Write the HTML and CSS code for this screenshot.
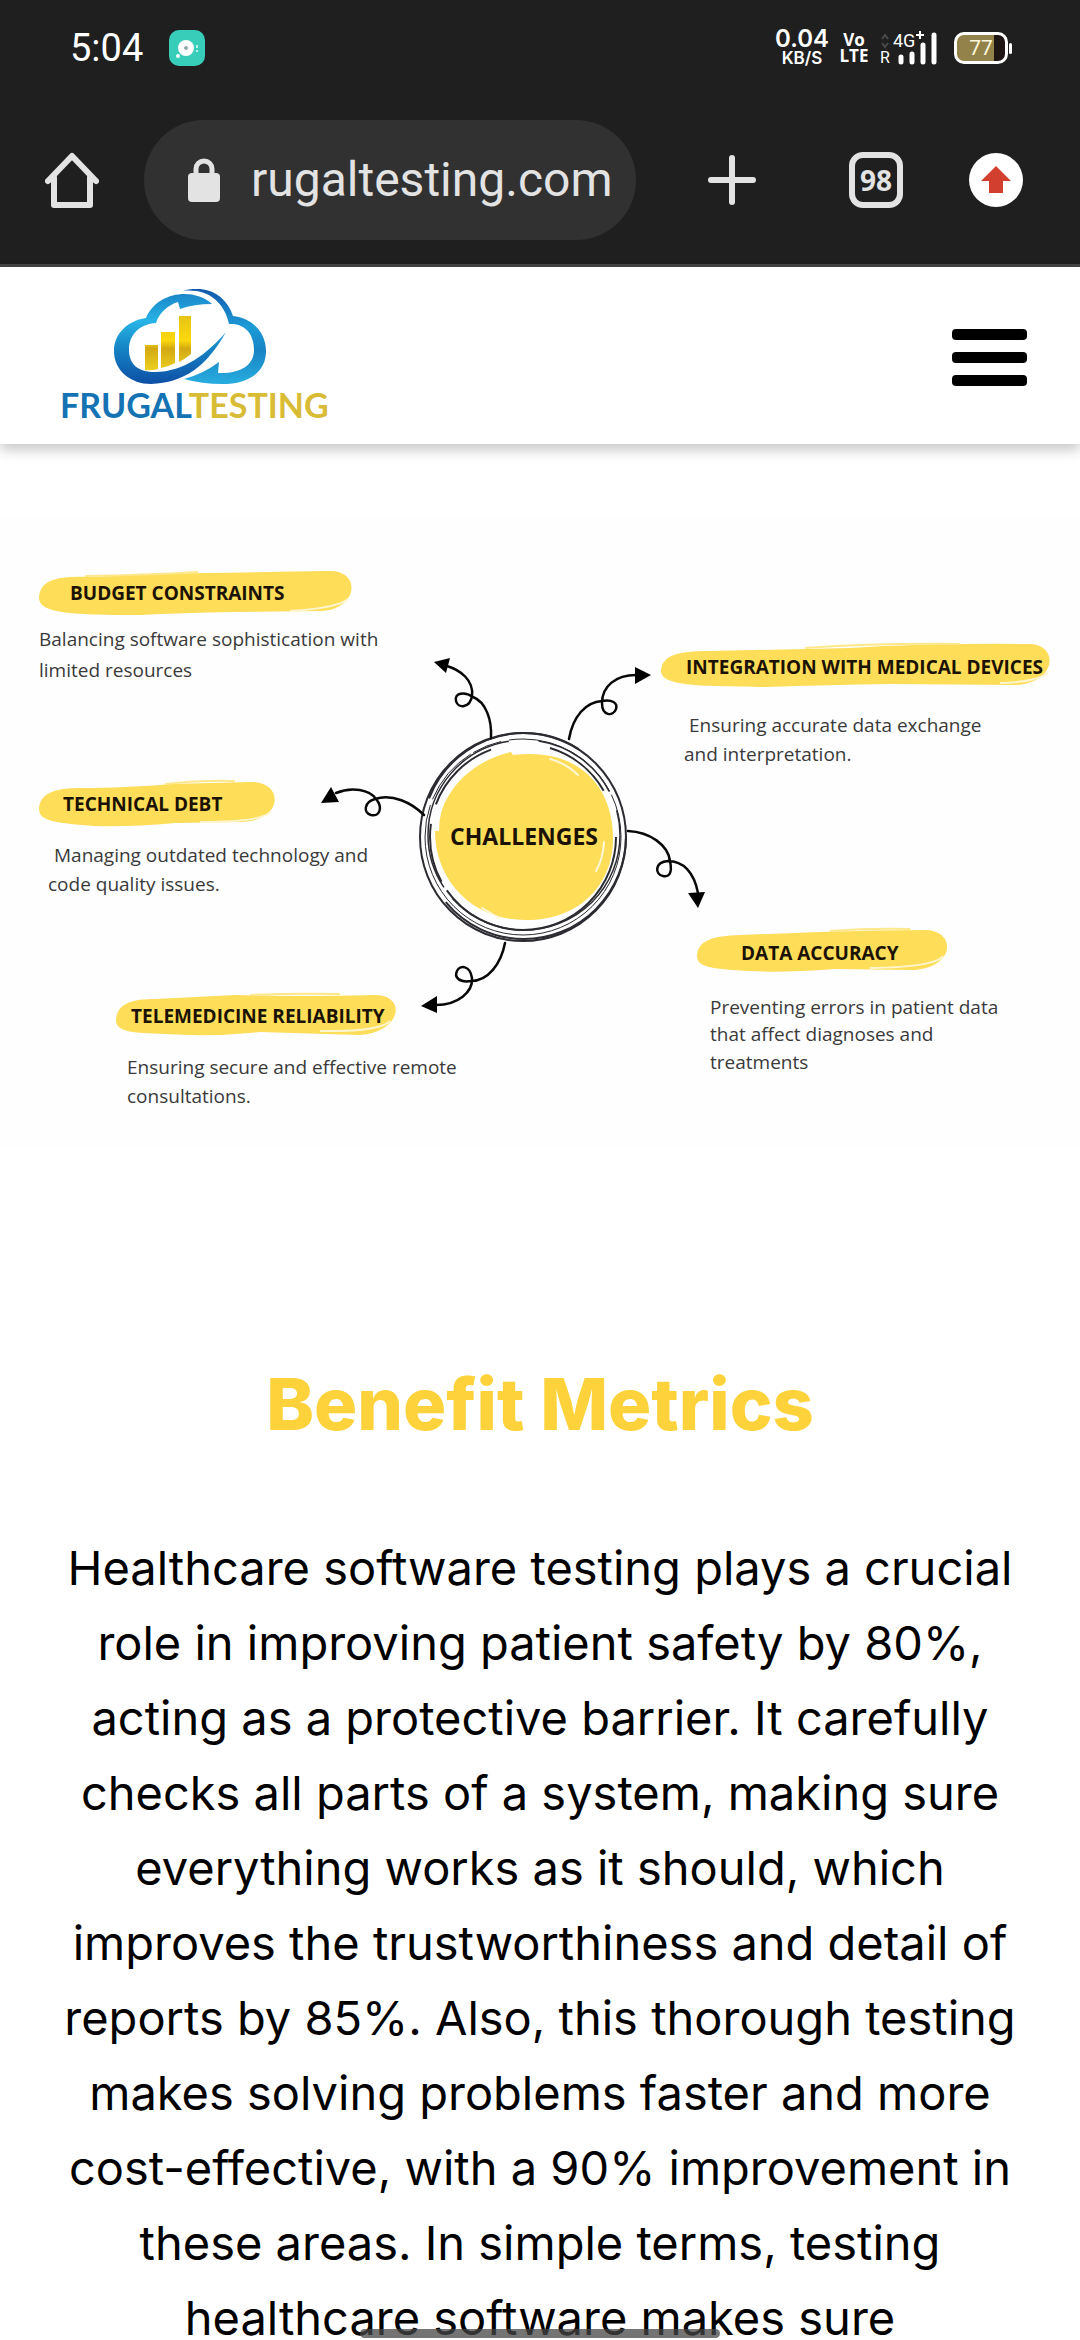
FILE: index.html
```html
<!DOCTYPE html>
<html lang="en">
<head>
<meta charset="utf-8">
<meta name="viewport" content="width=device-width, initial-scale=1">
<title>Frugal Testing</title>
<link rel="stylesheet" href="styles.css">
</head>
<body>
<div class="status">
  <time class="clock">5:04</time>
  <svg class="app-dot" viewBox="0 0 36 36" aria-hidden="true"><rect width="36" height="36" rx="10" fill="#38cdb8"/><circle cx="17" cy="18" r="8" fill="#fff"/><circle cx="9" cy="26" r="2" fill="#fff"/><circle cx="17" cy="18" r="2" fill="#8fa9a6"/><path d="M28 15v3M28 20v2" stroke="#b9f2ea" stroke-width="2"/></svg>
  <div class="indicators">
    <div class="speed"><span class="rate">0.04</span><span class="unit">KB/S</span></div>
    <div class="volte"><span>Vo</span><span>LTE</span></div>
    <svg class="signal" viewBox="0 0 58 34" role="img" aria-label="4G+ signal">
      <path d="M2 8l3-4 3 4M2 12l3 4 3-4" fill="none" stroke="#4a4a4a" stroke-width="2"/>
      <text class="signal-4g" x="13" y="16">4G</text><path d="M36 4h8M40 0v8" stroke="#fff" stroke-width="2"/>
      <text class="signal-r" x="0" y="32">R</text>
      <path d="M21 26v5M32 23v8M43 14v17M54 4v27" stroke="#fff" stroke-width="5" stroke-linecap="round"/>
    </svg>
    <div class="battery">77</div>
  </div>
</div>
<nav class="browser-bar">
  <button class="tool home" aria-label="Home"><svg viewBox="0 0 54 56"><path d="M3 29L27 4l24 25M9 25v28h36V25" fill="none" stroke="#e3e3e3" stroke-width="6" stroke-linejoin="round" stroke-linecap="round"/></svg></button>
  <button class="address"><svg class="lock" viewBox="0 0 32 44" aria-hidden="true"><path d="M8 17v-6a8 8 0 0116 0v6" fill="none" stroke="#e3e3e3" stroke-width="5"/><rect y="15" width="32" height="29" rx="4" fill="#e3e3e3"/></svg><span>rugaltesting.com</span></button>
  <div class="tools">
    <button class="tool new-tab" aria-label="New tab"><svg viewBox="0 0 54 56"><path d="M6 28h42M27 6v44" stroke="#e3e3e3" stroke-width="6" stroke-linecap="round"/></svg></button>
    <button class="tool tabs" aria-label="98 open tabs">98</button>
    <button class="tool" aria-label="Update available"><svg viewBox="0 0 54 56"><circle cx="27" cy="28" r="27" fill="#fff"/><path d="M27 14l15 15h-8v12H20V29h-8z" fill="#d33f2f"/></svg></button>
  </div>
</nav>
<header class="site-header">
  <a class="logo" href="#">
    <svg class="cloud" viewBox="114 288 154 96" aria-hidden="true">
      <defs>
        <linearGradient id="left" x1="0" y1="0" x2="0" y2="1"><stop offset="0" stop-color="#1b86c9"/><stop offset=".3" stop-color="#27b4e6"/><stop offset=".6" stop-color="#1684c4"/><stop offset="1" stop-color="#0d4fa6"/></linearGradient>
        <linearGradient id="right" x1="0" y1="0" x2="0" y2="1"><stop offset="0" stop-color="#1257ab"/><stop offset=".4" stop-color="#1c9bd7"/><stop offset=".65" stop-color="#1784c4"/><stop offset="1" stop-color="#28ade0"/></linearGradient>
        <linearGradient id="bar" x1="0" y1="0" x2="0" y2="1"><stop offset="0" stop-color="#e6c415"/><stop offset=".45" stop-color="#fbd90b"/><stop offset=".6" stop-color="#d3a913"/><stop offset="1" stop-color="#ecd020"/></linearGradient>
      </defs>
      <path fill="url(#left)" d="M212 303C193 286 157 291 146 317C126 320 114 334 114 350C114 370 131 383 151 383C184 382 207 365 226 331C208 352 184 371 155 371C139 371 129 364 129 349C129 333 140 323 156 322C159 312 168 304 178 301L180 308Q194 303 212 303Z"/>
      <path fill="url(#right)" d="M182 290C205 283 226 293 233 315C252 317 266 331 266 350C266 371 249 383 222 383Q202 383 184 378Q203 373 219 361L218 372C239 373 254 365 254 349C254 333 245 322 229 323C224 300 207 287 182 290Z"/>
      <path fill="url(#bar)" d="M145 344h13v24q-7 2-13 1zM161 331h14v31q-7 4-14 5zM179 315h12v38q-6 5-12 8z"/>
    </svg>
    <span class="wordmark">FRUGAL<b>TESTING</b></span>
  </a>
  <button class="menu" aria-label="Menu"><span></span><span></span><span></span></button>
</header>
<main>
  <figure class="challenges">
    <svg viewBox="0 518 1080 630" role="img" aria-label="Healthcare software testing challenges">
      <g class="brush">
        <path d="M39 598C40 580 56 576 90 577Q150 574 205 573Q270 572 330 571C362 571 358 610 320 611L235 612Q180 613 140 615C75 615 39 614 39 598Z"/>
        <path d="M39 809C40 792 56 787 90 788Q140 787 170 784L250 782C285 781 284 822 240 822L175 823Q130 827 95 826C58 823 39 822 39 809Z"/>
        <path d="M661 671C662 655 678 651 710 651L850 648Q930 643 1030 644C1060 645 1056 684 1015 685L890 684Q830 685 765 687C705 686 661 687 661 671Z"/>
        <path d="M697 956C698 940 713 936 740 935L820 932Q880 930 925 930C956 930 956 967 915 970L835 969Q780 973 750 971C715 969 697 968 697 956Z"/>
        <path d="M116 1020C117 1003 133 999 155 999L235 995Q290 997 375 995C407 995 402 1032 360 1035L260 1032Q210 1037 165 1034C132 1033 116 1032 116 1020Z"/>
      </g>
      <g class="brush-edge">
        <path d="M85 576Q145 575 198 572M165 784Q200 780 235 781M805 648Q880 643 960 644M830 931Q870 928 910 929M250 995Q290 993 340 994"/>
        <path class="shine" d="M290 611Q338 608 348 599M200 822Q264 822 271 811M1000 683Q1039 682 1048 672M870 968Q936 967 943 956M320 1031Q380 1032 390 1021"/>
      </g>
      <path class="brush" d="M449 795C465 769 490 757 511 752L513 755C577 747 613 785 613 838C613 889 575 921 525 920C472 920 435 880 435 831L439 831Q439 810 449 795Z"/>
      <path d="M550 759Q567 764 578 775M604 842Q603 859 596 871M482 908L499 918" fill="none" stroke="#fff8da" stroke-width="2" stroke-linecap="round"/>
      <g class="ring">
        <ellipse cx="523" cy="837" rx="103" ry="104" stroke-width="2"/>
        <ellipse cx="524" cy="836" rx="102" ry="103" stroke-width="2" stroke-dasharray="250 110 180 110"/>
        <ellipse cx="523" cy="837" rx="98" ry="98" stroke-width="1" stroke-dasharray="340 6 60 3 30 8 120 4"/>
        <ellipse cx="524" cy="835" rx="96" ry="95" stroke-width="1.5" stroke-dasharray="230 14 190 30 90 20"/>
        <ellipse cx="523" cy="837" rx="93" ry="93" stroke-width="2" stroke-dasharray="235 10 60 20 80 60 70 50"/>
      </g>
      <g class="arrow-line">
        <path d="M491 738C492 720 486 702 473 697C464 691 454 693 456 701C458 709 470 708 472 696C474 680 460 670 447 666"/>
        <path d="M569 739C573 716 586 702 602 701C612 699 618 703 616 709C613 717 602 716 602 703C602 686 616 675 636 675"/>
        <path d="M424 815C412 803 392 793 375 799C364 802 363 813 371 815C380 817 383 807 376 799C370 790 352 786 336 793"/>
        <path d="M505 943C501 964 488 981 471 981C459 983 454 977 457 971C460 965 470 965 472 978C473 992 458 1005 436 1005"/>
        <path d="M628 831C650 832 668 845 670 861C673 875 668 877 663 876C655 875 654 862 668 861C683 861 694 872 698 893"/>
      </g>
      <path d="M434 662l16-4-4 15zM651 675l-16-8v17zM321 803l10-16 8 15zM421 1006l16-10v17zM698 908l-10-15 17-1z"/>
      <g class="topic">
        <text x="70" y="600">BUDGET CONSTRAINTS</text>
        <text x="63" y="811">TECHNICAL DEBT</text>
        <text x="131" y="1023">TELEMEDICINE RELIABILITY</text>
        <text x="686" y="674">INTEGRATION WITH MEDICAL DEVICES</text>
        <text x="741" y="960">DATA ACCURACY</text>
      </g>
      <text class="hub" x="524" y="845">CHALLENGES</text>
      <g class="detail">
        <text x="39" y="646">Balancing software sophistication with</text>
        <text x="39" y="677">limited resources</text>
        <text x="54" y="862">Managing outdated technology and</text>
        <text x="48" y="891">code quality issues.</text>
        <text x="127" y="1074">Ensuring secure and effective remote</text>
        <text x="127" y="1103">consultations.</text>
        <text x="689" y="732">Ensuring accurate data exchange</text>
        <text x="684" y="761">and interpretation.</text>
        <text x="710" y="1014">Preventing errors in patient data</text>
        <text x="710" y="1041">that affect diagnoses and</text>
        <text x="710" y="1069">treatments</text>
      </g>
    </svg>
  </figure>
  <section class="benefits">
    <h1>Benefit Metrics</h1>
    <p>Healthcare software testing plays a crucial<br>role in improving patient safety by 80%,<br>acting as a protective barrier. It carefully<br>checks all parts of a system, making sure<br>everything works as it should, which<br>improves the trustworthiness and detail of<br>reports by 85%. Also, this thorough testing<br>makes solving problems faster and more<br>cost-effective, with a 90% improvement in<br>these areas. In simple terms, testing<br>healthcare software makes sure</p>
  </section>
</main>
<div class="gesture-pill"></div>
</body>
</html>
```
FILE: styles.css
```css
* { box-sizing: border-box; }

body {
  margin: 0;
  height: 100vh;
  overflow: hidden;
  display: flex;
  flex-direction: column;
  background: #fff;
  color: #000;
  font-family: Inter, "Open Sans", sans-serif;
}

button {
  border: 0;
  padding: 0;
  background: none;
  color: inherit;
  font: inherit;
}

svg { display: block; }

.status,
.browser-bar {
  flex: none;
  display: flex;
  align-items: center;
  background: #1f1f1f;
  color: #fff;
  font-family: Roboto, sans-serif;
}

.status {
  height: 96px;
  padding: 0 68px 0 70px;
}

.clock {
  font-size: 38px;
  line-height: 40px;
}

.app-dot {
  width: 36px;
  height: 36px;
  margin-left: 26px;
}

.indicators {
  display: flex;
  align-items: center;
  margin-left: auto;
}

.speed,
.volte {
  display: flex;
  flex-direction: column;
  align-items: center;
}

.speed { width: 52px; font-family: Inter, sans-serif; font-weight: 600; }
.rate { font-size: 24px; line-height: 21px; }
.unit { font-size: 17px; line-height: 19px; }

.volte {
  width: 24px;
  margin: 0 14px;
  font-family: "Liberation Sans Narrow", "Open Sans", sans-serif;
  font-size: 17px;
  font-weight: 700;
  line-height: 16px;
}

.signal { width: 58px; height: 34px; margin-right: 16px; overflow: visible; }
.signal text { fill: #fff; font-family: Roboto, sans-serif; }
.signal-4g { font-size: 18px; }
.signal-r { font-size: 16px; }

.battery {
  position: relative;
  width: 54px;
  height: 32px;
  margin-right: 4px;
  border: 3px solid #fff;
  border-radius: 10px;
  background: linear-gradient(90deg, #93834a 78%, #1f1515 78%);
  color: #fff8dc;
  font-size: 21px;
  line-height: 26px;
  text-align: center;
}

.battery::after {
  content: "";
  position: absolute;
  top: 8px;
  right: -7px;
  width: 3px;
  height: 11px;
  border-radius: 2px;
  background: #fff;
}

.browser-bar {
  height: 171px;
  padding: 0 57px 0 45px;
  border-bottom: 3px solid #444;
  color: #e3e3e3;
}

.tool { width: 54px; height: 56px; }

.address {
  display: flex;
  align-items: center;
  gap: 31px;
  width: 492px;
  height: 120px;
  margin: 0 45px;
  padding: 0 0 0 44px;
  border-radius: 60px;
  background: #313131;
  font-size: 48px;
  line-height: 60px;
}

.lock { width: 32px; height: 44px; }

.tools {
  flex: 1;
  display: flex;
  justify-content: flex-end;
  gap: 66px;
}

.new-tab { margin-right: 24px; }

.tabs {
  border: 6px solid #e3e3e3;
  border-radius: 14px;
  font-family: "Liberation Sans Narrow", "Open Sans", sans-serif;
  font-size: 28px;
  font-weight: 700;
}

.site-header {
  position: relative;
  flex: none;
  display: flex;
  align-items: center;
  justify-content: space-between;
  height: 177px;
  padding: 0 53px 0 60px;
  background: #fff;
  box-shadow: 0 6px 12px rgba(0, 0, 0, 0.22);
}

.logo {
  display: flex;
  flex-direction: column;
  align-items: flex-start;
  padding-top: 3px;
  color: #1573b4;
  text-decoration: none;
}

.cloud { width: 154px; height: 96px; margin-left: 54px; }

.wordmark {
  font-family: Lato, sans-serif;
  font-size: 34px;
  font-weight: 700;
  line-height: 40px;
}

.wordmark b { font-weight: 700; color: #d9bc35; }

.menu {
  display: flex;
  flex-direction: column;
  gap: 12px;
  padding-top: 4px;
}

.menu span {
  width: 75px;
  height: 11px;
  border-radius: 4px;
  background: #000;
}

main { flex: 1; min-height: 0; }

.challenges {
  margin: 74px 0 0;
  background: #fefefe;
}

.challenges svg { width: 100%; height: auto; }
.challenges text { font-family: "Open Sans", sans-serif; }

.brush { fill: #fedd58; }
.brush-edge { fill: none; stroke: #fee88b; stroke-width: 2; }
.shine { stroke: #fff6cf; }
.ring { fill: none; stroke: #2b2b32; }
.arrow-line { fill: none; stroke: #080808; stroke-width: 2.5; stroke-linecap: round; }
.topic { font-size: 19px; font-weight: 700; fill: #1b1204; }
.hub { font-size: 23px; font-weight: 700; fill: #1b1204; text-anchor: middle; }
.detail { font-size: 19px; fill: #3a3a3a; }

.benefits {
  padding: 206px 40px 0;
  text-align: center;
}

.benefits h1 {
  margin: 0;
  color: #fdd23a;
  font-size: 72px;
  font-weight: 800;
  line-height: 100px;
}

.benefits p {
  margin: 76px 0 0;
  font-size: 47px;
  line-height: 75px;
  white-space: nowrap;
}

.gesture-pill {
  position: fixed;
  bottom: 2px;
  left: calc(50% - 180px);
  width: 360px;
  height: 9px;
  border-radius: 5px;
  background: rgba(70, 70, 70, 0.75);
}
```
